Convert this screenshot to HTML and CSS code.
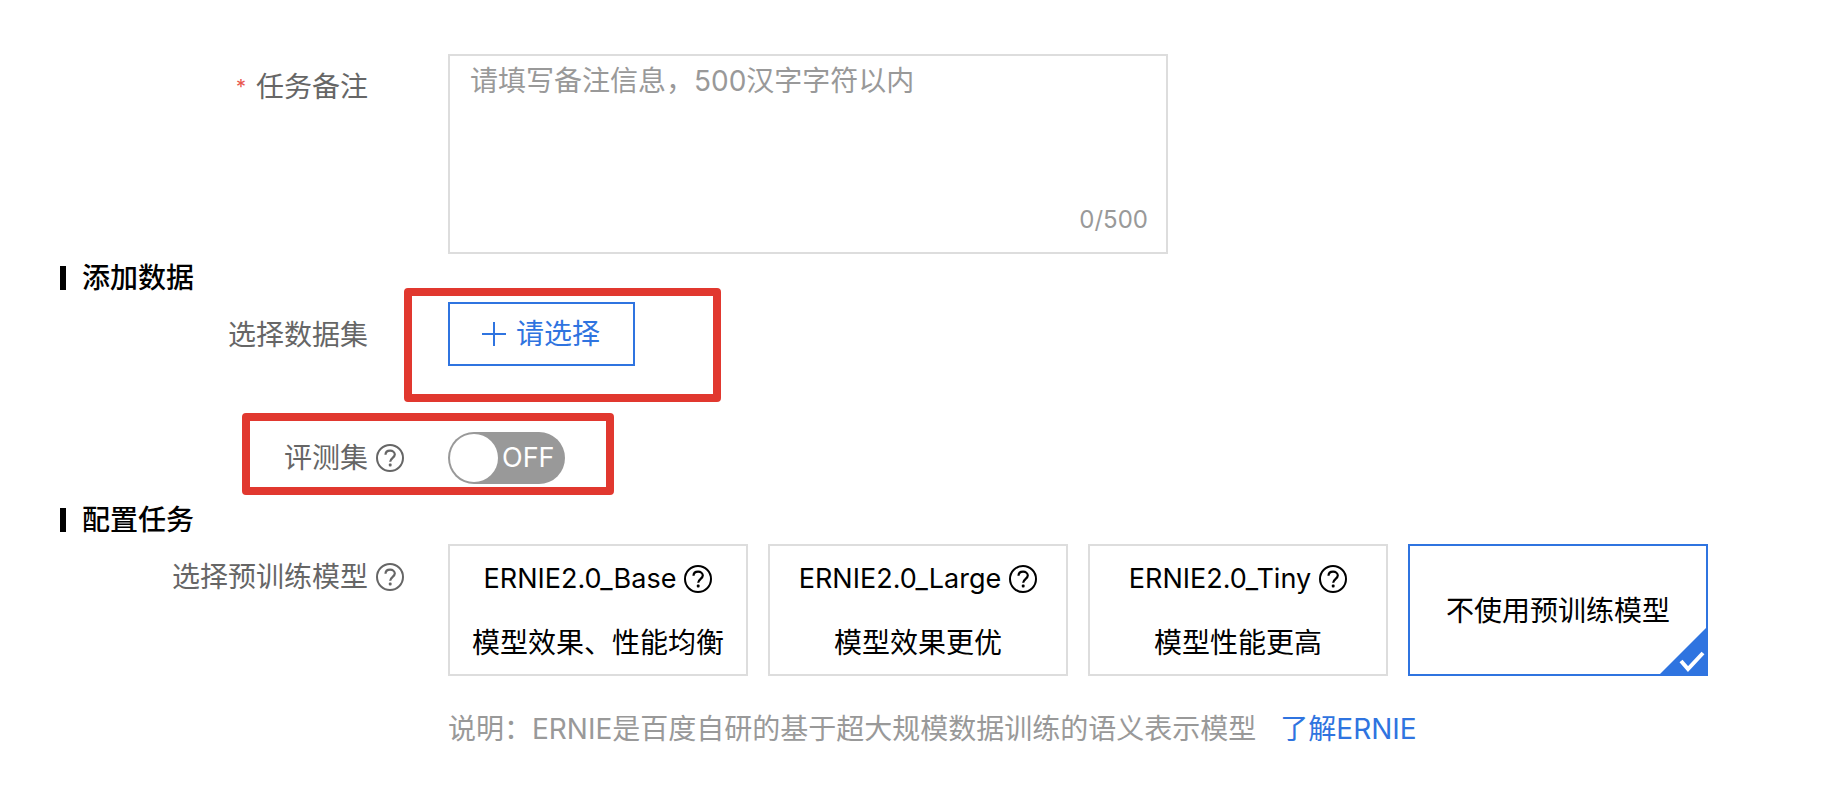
FILE: index.html
```
<!DOCTYPE html>
<html lang="zh-CN">
    <head>
        <meta charset="utf-8">
        <title>新建任务</title>
        <link rel="stylesheet" href="styles.css">
    </head>
    <body>
    <svg class="sprite" aria-hidden="true">
        <symbol id="help" viewBox="0 0 28 28">
            <circle cx="14" cy="14" r="13" fill="none" stroke="currentColor" stroke-width="2"/>
            <path d="M9.500 10.800C9.500 8.200 11.500 6.700 14.100 6.700S18.800 8.300 18.800 10.600C18.800 13.700 14.200 14 14.200 17.800" fill="none" stroke="currentColor" stroke-width="2.200"/>
            <rect x="12.800" y="19.600" width="2.800" height="2.800" rx="1" fill="currentColor"/>
        </symbol>
    </svg>
    <form class="task-form">
        <div class="row">
            <label class="row-label no-help" for="remark"><span class="required">*</span>任务备注</label>
            <div class="remark-box">
                <textarea id="remark" class="remark-input" maxlength="500" placeholder="请填写备注信息，500汉字字符以内"></textarea>
                <span class="remark-count">0/500</span>
            </div>
        </div>

        <h2 class="section-title">添加数据</h2>
        <div class="row row-dataset">
            <label class="row-label no-help" for="dataset">选择数据集</label>
            <div class="dataset-box">
                <button type="button" id="dataset" class="select-button">
                    <svg class="plus" viewBox="0 0 24 24"><path d="M12 0V24M0 12H24" stroke="currentColor" stroke-width="2"/></svg>
                    请选择
                </button>
                <div class="mark mark-dataset"></div>
            </div>
        </div>
        <div class="row row-eval">
            <label class="row-label" for="evalset">评测集<svg class="help"><use href="#help"/></svg></label>
            <label class="switch">
                <input type="checkbox" id="evalset" class="switch-input">
                <span class="switch-knob"></span>
                <span class="switch-text">OFF</span>
            </label>
            <div class="mark mark-eval"></div>
        </div>

        <h2 class="section-title">配置任务</h2>
        <div class="row">
            <div class="row-label" id="model-label">选择预训练模型<svg class="help"><use href="#help"/></svg></div>
            <div class="model-box">
                <div class="models" role="radiogroup" aria-labelledby="model-label">
                    <label class="model">
                        <input type="radio" name="model" class="model-input">
                        <span class="model-name">ERNIE2.0_Base<svg class="help"><use href="#help"/></svg></span>
                        <span>模型效果、性能均衡</span>
                    </label>
                    <label class="model">
                        <input type="radio" name="model" class="model-input">
                        <span class="model-name">ERNIE2.0_Large<svg class="help"><use href="#help"/></svg></span>
                        <span>模型效果更优</span>
                    </label>
                    <label class="model">
                        <input type="radio" name="model" class="model-input">
                        <span class="model-name">ERNIE2.0_Tiny<svg class="help"><use href="#help"/></svg></span>
                        <span>模型性能更高</span>
                    </label>
                    <label class="model model-active">
                        <input type="radio" name="model" class="model-input" checked>
                        <span>不使用预训练模型</span>
                        <svg class="corner" viewBox="0 0 50 50">
                            <path d="M50 0V50H0Z" fill="#2f74e0"/>
                            <path d="M23 35L30 43L45 27" fill="none" stroke="#fff" stroke-width="4"/>
                        </svg>
                    </label>
                </div>
                <p class="note">说明：ERNIE是百度自研的基于超大规模数据训练的语义表示模型<a class="note-link" href="#">了解ERNIE</a></p>
            </div>
        </div>
    </form>
    </body>
</html>
```
FILE: styles.css
```
* {
    box-sizing: border-box;
}

body {
    margin: 0;
    background-color: #fff;
    color: #000;
    font-family: Inter, "Noto Sans CJK SC", sans-serif;
    font-size: 28px;
    line-height: 40px;
}

.sprite {
    display: none;
}

.task-form {
    padding: 54px 60px;
}

.row {
    position: relative;
    display: flex;
    align-items: flex-start;
    gap: 44px;
}

.row-label {
    display: flex;
    flex: 0 0 344px;
    justify-content: flex-end;
    align-items: center;
    gap: 8px;
    height: 66px;
    color: #666;
}

.no-help {
    padding-right: 36px;
}

.required {
    margin-right: 2px;
    color: #e8554d;
    font-size: 20px;
}

.help {
    flex: none;
    width: 28px;
    height: 28px;
}

/* remark */
.remark-box {
    position: relative;
    flex: 0 1 720px;
}

.remark-input {
    display: block;
    width: 100%;
    height: 200px;
    padding: 5px 20px;
    border: 2px solid #ddd;
    border-radius: 0;
    outline: none;
    resize: none;
    font: inherit;
}

.remark-input::placeholder {
    color: #999;
    opacity: 1;
}

.remark-count {
    position: absolute;
    right: 20px;
    bottom: 14px;
    color: #999;
    font-size: 24px;
}

.section-title {
    display: flex;
    align-items: center;
    gap: 16px;
    margin: 0;
    font-size: 28px;
    font-weight: 500;
    line-height: 48px;
}

.section-title::before {
    content: "";
    width: 6px;
    height: 24px;
    background-color: #000;
}

/* dataset */
.row-dataset {
    margin-bottom: 64px;
}

.dataset-box {
    position: relative;
}

.select-button {
    display: flex;
    align-items: center;
    gap: 10px;
    height: 64px;
    padding: 0 33px 0 32px;
    border: 2px solid #2f74e0;
    background-color: #fff;
    color: #2f74e0;
    font: inherit;
    cursor: pointer;
}

.plus {
    width: 24px;
    height: 24px;
}

/* red frames lying over the form */
.mark {
    position: absolute;
    border: 8px solid #e1382f;
    border-radius: 4px;
    pointer-events: none;
}

.mark-dataset {
    top: -14px;
    left: -44px;
    width: 317px;
    height: 114px;
}

.mark-eval {
    top: -19px;
    left: 182px;
    width: 372px;
    height: 82px;
}

/* switch */
.row-eval {
    align-items: center;
    margin-bottom: 12px;
}

.row-eval .row-label {
    height: 52px;
}

.switch {
    display: flex;
    align-items: center;
    gap: 4px;
    width: 117px;
    height: 52px;
    padding: 2px;
    border-radius: 26px;
    background-color: #999;
    color: #fff;
    font-size: 27px;
    cursor: pointer;
}

.switch-input,
.model-input {
    position: absolute;
    margin: 0;
    opacity: 0;
}

.switch-knob {
    flex: none;
    width: 48px;
    height: 48px;
    border-radius: 50%;
    background-color: #fff;
}

/* models */
.model-box {
    flex: 0 1 1260px;
}

.models {
    display: grid;
    grid-template-columns: repeat(4, 1fr);
    gap: 20px;
}

.model {
    position: relative;
    display: flex;
    flex-direction: column;
    justify-content: center;
    align-items: center;
    gap: 24px;
    height: 132px;
    padding-top: 2px;
    border: 2px solid #ddd;
    white-space: nowrap;
    cursor: pointer;
}

.model-name {
    display: flex;
    align-items: center;
    gap: 8px;
    font-size: 27px;
}

.model-active {
    border-color: #2f74e0;
}

.corner {
    position: absolute;
    right: -2px;
    bottom: -2px;
    width: 50px;
    height: 50px;
}

.note {
    margin: 33px 0 0;
    color: #999;
}

.note-link {
    margin-left: 24px;
    color: #2f74e0;
    text-decoration: none;
}
```
